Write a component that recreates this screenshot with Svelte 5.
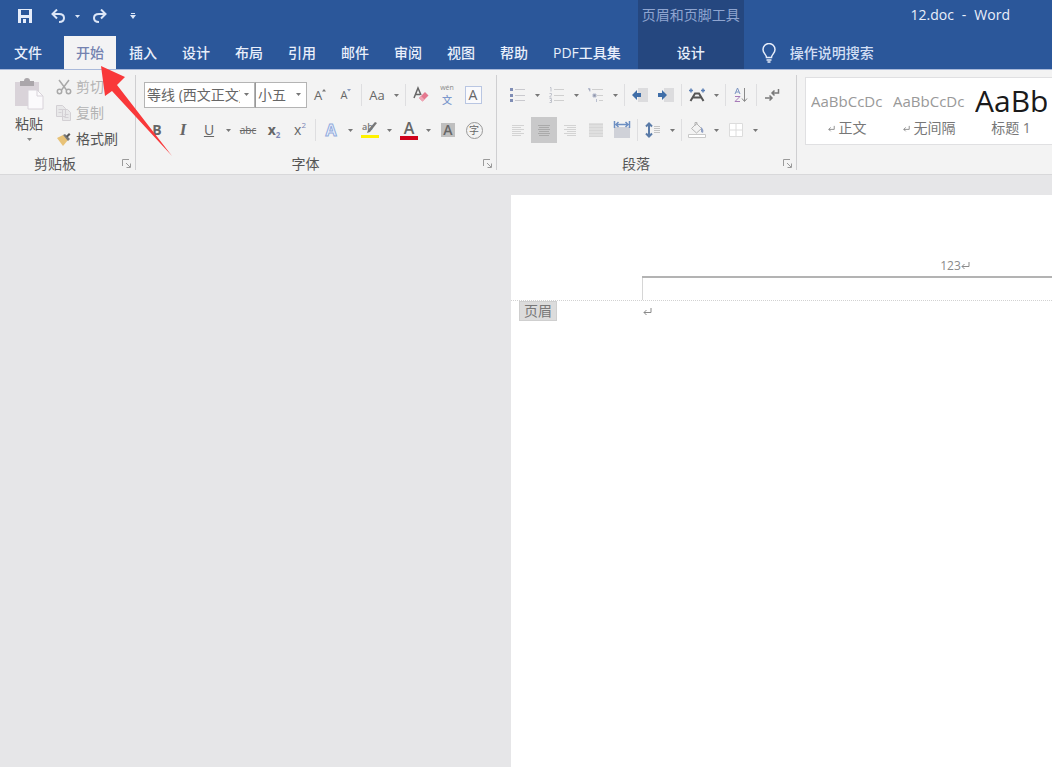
<script>
  const tabs = ['插入', '设计', '布局', '引用', '邮件', '审阅', '视图', '帮助', 'PDF工具集'];
  const styles = [
    { name: '正文', sample: 'AaBbCcDc', mark: true },
    { name: '无间隔', sample: 'AaBbCcDc', mark: true },
    { name: '标题 1', sample: 'AaBb', big: true },
  ];

  let active = $state('开始');
  let font = $state('等线 (西文正文)');
  let size = $state('小五');
</script>

{#snippet caret(label)}
  <button class="caret" aria-label={label}>
    <svg width="5" height="3" viewBox="0 0 5 3"><path d="M0 0h5L2.500 3z" fill="#777" /></svg>
  </button>
{/snippet}

{#snippet launcher(label)}
  <button class="launcher" aria-label={label}>
    <svg width="10" height="10" viewBox="0 0 10 10" fill="none" stroke="#9a9a9a">
      <path d="M.5 7V.5H7M4 4l4 4M8.500 4.500v4h-4" />
    </svg>
  </button>
{/snippet}

{#snippet mark()}
  <svg class="mark" width="9" height="8" viewBox="0 0 9 8" fill="none" stroke="currentColor">
    <path d="M8 0v4.500H1M3.500 2L1 4.500 3.500 7" />
  </svg>
{/snippet}

<div class="app">
  <header class="top">
    <div class="main-tabs">
      <div class="quick">
        <button aria-label="保存">
          <svg width="14" height="14" viewBox="0 0 14 14">
            <path d="M0 0h14v14H0z" fill="#e6edfa" />
            <path d="M3 1h8v5H3zM3 9h8v5H3z" fill="#2b579a" />
            <path d="M5 10h3v4H5z" fill="#e6edfa" />
          </svg>
        </button>
        <button class="undo" aria-label="撤消">
          <svg width="14" height="14" viewBox="0 0 14 14" fill="none" stroke="#dce6f7" stroke-width="2">
            <path d="M6 0.500L1.500 5 6 9.500M2 5h6c3 0 5 1.500 5 4s-2 4-5 4" />
          </svg>
        </button>
        <button class="drop" aria-label="撤消列表">
          <svg width="5" height="3" viewBox="0 0 5 3"><path d="M0 0h5L2.500 3z" fill="#dce6f7" /></svg>
        </button>
        <button class="redo" aria-label="恢复">
          <svg width="14" height="14" viewBox="0 0 14 14" fill="none" stroke="#dce6f7" stroke-width="2">
            <path d="M8 .5L12.500 5 8 9.500M12 5H6C3 5 1 6.500 1 9s2 4 5 4" />
          </svg>
        </button>
        <button class="more" aria-label="自定义快速访问工具栏">
          <svg width="6" height="6" viewBox="0 0 6 6" fill="#dce6f7"><path d="M1 0h4v1H1zM0 2h6L3 6z" /></svg>
        </button>
      </div>
      <nav class="tabs">
        <button class="tab file">文件</button>
        <button class="tab" class:active={active === '开始'} onclick={() => (active = '开始')}>开始</button>
        {#each tabs as t (t)}
          <button class="tab" class:active={active === t} onclick={() => (active = t)}>{t}</button>
        {/each}
      </nav>
    </div>
    <div class="context">
      <div class="context-name">页眉和页脚工具</div>
      <button class="tab">设计</button>
    </div>
    <div class="right">
      <div class="title"><span>12.doc</span><span>-</span><span>Word</span></div>
      <label class="tell">
        <svg width="14" height="20" viewBox="0 0 14 20" fill="none" stroke="#e6edfa" stroke-width="1.500">
          <path d="M4.500 14.500c0-3-3.500-4-3.500-8a6 6 0 0 1 12 0c0 4-3.500 5-3.500 8z" />
          <path d="M4.500 17h5M5.500 19h3" />
        </svg>
        <input type="text" placeholder="操作说明搜索" aria-label="操作说明搜索" />
      </label>
    </div>
  </header>

  <div class="ribbon">
    <section class="group clipboard">
      <div class="clip-body">
        <button class="paste">
          <svg width="32" height="32" viewBox="0 0 32 32">
            <path d="M2 4h24v24H2z" fill="#d9d3d9" />
            <path d="M7 3h4a3 3 0 0 1 6 0h4v5H7z" fill="#aaa6aa" />
            <path d="M15 12h9l6 6v13H15z" fill="#fbfafc" stroke="#d8d3da" />
            <path d="M24 12v6h6" fill="none" stroke="#d8d3da" />
          </svg>
          <span>粘贴</span>
          <svg width="5" height="3" viewBox="0 0 5 3"><path d="M0 0h5L2.500 3z" fill="#888" /></svg>
        </button>
        <div class="clip-list">
          <button class="dim">
            <svg width="16" height="16" viewBox="0 0 16 16" fill="none" stroke="#a9a9a9" stroke-width="1.500">
              <path d="M3 1l7.500 10M13 1L5.500 11" />
              <circle cx="3.500" cy="12.500" r="2.200" /><circle cx="12.500" cy="12.500" r="2.200" />
            </svg>
            剪切
          </button>
          <button class="dim">
            <svg width="16" height="16" viewBox="0 0 16 16" fill="#e8e8e9" stroke="#d3d0d4">
              <path d="M.5 .5h6l3 3v8h-9zM6.500 4.500h5l3 3v8h-8z" />
              <path d="M2.500 4.500h4M2.500 7.500h3M8.500 9.500h4M8.500 12.500h4" />
            </svg>
            复制
          </button>
          <button>
            <svg width="16" height="16" viewBox="0 0 16 16">
              <path d="M1 7l6-3 5 5-5 6z" fill="#e8c277" />
              <path d="M7 4l2-1 5 5-2 2z" fill="#777" />
              <path d="M10 5l3-3 1.500 1.500-3 3z" fill="#555" />
            </svg>
            格式刷
          </button>
        </div>
      </div>
      <footer><span>剪贴板</span>{@render launcher('剪贴板设置')}</footer>
    </section>

    <section class="group font">
      <div class="rows">
        <div class="row">
          <div class="combo name">
            <select aria-label="字体" bind:value={font}>
              <option>等线 (西文正文)</option>
              <option>宋体</option>
            </select>
            <svg width="5" height="3" viewBox="0 0 5 3"><path d="M0 0h5L2.500 3z" fill="#777" /></svg>
          </div>
          <div class="combo size">
            <select aria-label="字号" bind:value={size}>
              <option>小五</option>
              <option>五号</option>
            </select>
            <svg width="5" height="3" viewBox="0 0 5 3"><path d="M0 0h5L2.500 3z" fill="#777" /></svg>
          </div>
          <button class="tool" aria-label="增大字号">
            <span class="grow">A</span>
            <svg width="4" height="12" viewBox="0 0 4 12"><path d="M0 2.500L2 0l2 2.500z" fill="#777" /></svg>
          </button>
          <button class="tool" aria-label="减小字号">
            <span class="shrink">A</span>
            <svg width="4" height="12" viewBox="0 0 4 12"><path d="M0 0h4L2 2.500z" fill="#8a9cc0" /></svg>
          </button>
          <i class="sep"></i>
          <button class="tool case">Aa</button>
          {@render caret('更改大小写')}
          <i class="sep"></i>
          <button class="tool" aria-label="清除格式">
            <svg width="16" height="18" viewBox="0 0 16 18">
              <path d="M1 12L5 2l3 7M2.500 8.500H7" fill="none" stroke="#666" stroke-width="1.500" />
              <path d="M6 12l6-6 3.500 3.500-6 6z" fill="#e5788f" />
              <path d="M6 12l2-2 3.500 3.500-2 2z" fill="#efa5b4" />
            </svg>
          </button>
          <button class="tool phonetic"><small>wén</small><b>文</b></button>
          <button class="tool"><span class="boxed">A</span></button>
        </div>
        <div class="row">
          <button class="tool bold">B</button>
          <button class="tool italic">I</button>
          <button class="tool underline">U</button>
          {@render caret('下划线样式')}
          <button class="tool strike">abc</button>
          <button class="tool script">x<sub>2</sub></button>
          <button class="tool script light">x<sup>2</sup></button>
          <i class="sep"></i>
          <button class="tool effect">A</button>
          {@render caret('文本效果')}
          <button class="tool" aria-label="突出显示">
            <svg width="20" height="22" viewBox="0 0 20 22">
              <text x="2" y="11" font-size="9" font-weight="600" fill="#777">ab</text>
              <path d="M17 4l-7 9-3 1 1-3 7-8z" fill="#777" />
              <path d="M1 16h18v3H1z" fill="#fff200" />
            </svg>
          </button>
          {@render caret('突出显示颜色')}
          <button class="tool"><span class="color">A</span></button>
          {@render caret('字体颜色')}
          <button class="tool"><span class="shade">A</span></button>
          <button class="tool"><span class="ring">字</span></button>
        </div>
      </div>
      <footer><span>字体</span>{@render launcher('字体设置')}</footer>
    </section>

    <section class="group para">
      <div class="rows">
        <div class="row">
          <button class="tool" aria-label="项目符号">
            <svg width="16" height="16" viewBox="0 0 16 16">
              <path d="M5 2.500h10M5 8.500h10M5 13.500h10" stroke="#c9c9ce" />
              <path d="M0 1h3v3H0zM0 7h3v3H0zM0 12h3v3H0z" fill="#7f8db5" />
            </svg>
          </button>
          {@render caret('项目符号库')}
          <button class="tool" aria-label="编号">
            <svg width="16" height="16" viewBox="0 0 16 16">
              <path d="M5 2.500h10M5 8.500h10M5 13.500h10" stroke="#cfcfcf" />
              <path d="M1 .5h1v4M.5 6.500h2v1.500l-2 2h2M.5 11.500h2v4h-2M1 13.500h1" fill="none" stroke="#c0c3cc" />
            </svg>
          </button>
          {@render caret('编号库')}
          <button class="tool" aria-label="多级列表">
            <svg width="16" height="16" viewBox="0 0 16 16">
              <path d="M4 2.500h11M9 8.500h6M11 13.500h4" stroke="#cfcfcf" />
              <path d="M0 1.500h2v3M5 7h3v3H5zM8.500 12v3" fill="#8d93a8" stroke="#b9bfd0" />
            </svg>
          </button>
          {@render caret('列表库')}
          <i class="sep"></i>
          <button class="tool" aria-label="减少缩进量">
            <svg width="16" height="14" viewBox="0 0 16 14">
              <path d="M6 0h10v14H6z" fill="#dcdcde" />
              <path d="M0 7l5-5v3h4v4H5v3z" fill="#3f6ea8" />
            </svg>
          </button>
          <button class="tool" aria-label="增加缩进量">
            <svg width="16" height="14" viewBox="0 0 16 14">
              <path d="M6 0h10v14H6z" fill="#dcdcde" />
              <path d="M9 7L4 2v3H0v4h4v3z" fill="#3f6ea8" />
            </svg>
          </button>
          <i class="sep"></i>
          <button class="tool" aria-label="中文版式">
            <svg width="16" height="14" viewBox="0 0 16 14">
              <path d="M1.500 13L6 5.500h4l4.500 7.500M4 9.500h8" fill="none" stroke="#555" stroke-width="2" />
              <path d="M0 2.500h4M2 .5v4M12 2.500h4M14 .5v4" stroke="#5b7fb5" stroke-width="1.500" />
            </svg>
          </button>
          {@render caret('中文版式选项')}
          <i class="sep"></i>
          <button class="tool" aria-label="排序">
            <svg width="14" height="16" viewBox="0 0 14 16" fill="none">
              <path d="M1 7l2.500-6L6 7M2 5h3" stroke="#7d95c2" />
              <path d="M1 9.500h5l-5 5h5" stroke="#a77bb8" />
              <path d="M10.500 1v13M8 11.500l2.500 3 2.500-3" stroke="#8a8a8a" />
            </svg>
          </button>
          <i class="sep"></i>
          <button class="tool" aria-label="显示编辑标记">
            <svg width="16" height="14" viewBox="0 0 16 14" fill="none" stroke="#7a7a7a" stroke-width="1.500">
              <path d="M14.500 1v4H8M10.500 2.500L8 5l2.500 2.500M1 10h7M5.500 7.500L8 10l-2.500 2.500" />
            </svg>
          </button>
        </div>
        <div class="row">
          <button class="tool" aria-label="左对齐">
            <svg width="14" height="13" viewBox="0 0 14 13" stroke="#d3d3d3">
              <path d="M1 1.500h12M1 3.500h9M1 5.500h12M1 7.500h9M1 9.500h12M1 11.500h9" />
            </svg>
          </button>
          <button class="tool pressed" aria-label="居中">
            <svg width="14" height="13" viewBox="0 0 14 13" stroke="#aaa">
              <path d="M1 1.500h12M2 3.500h10M1 5.500h12M2 7.500h10M1 9.500h12M2 11.500h10" />
            </svg>
          </button>
          <button class="tool" aria-label="右对齐">
            <svg width="14" height="13" viewBox="0 0 14 13" stroke="#d3d3d3">
              <path d="M1 1.500h12M4 3.500h9M1 5.500h12M4 7.500h9M1 9.500h12M4 11.500h9" />
            </svg>
          </button>
          <button class="tool" aria-label="两端对齐">
            <svg width="14" height="14" viewBox="0 0 14 14">
              <path d="M0 0h14v14H0z" fill="#dfdfdf" />
              <path d="M0 1.500h14M0 4.500h14M0 7.500h14M0 10.500h14M0 13.500h14" stroke="#d6d6d6" />
            </svg>
          </button>
          <button class="tool" aria-label="分散对齐">
            <svg width="18" height="18" viewBox="0 0 18 18">
              <path d="M1 6h16v11H1z" fill="#cfd1d8" />
              <path d="M1.500 0v7M16.500 0v7M3 3.500h12M5.500 1L3 3.500 5.500 6M12.500 1L15 3.500 12.500 6" fill="none" stroke="#6d8fc2" stroke-width="1.500" />
            </svg>
          </button>
          <i class="sep"></i>
          <button class="tool" aria-label="行距">
            <svg width="16" height="16" viewBox="0 0 16 16" fill="none">
              <path d="M4 1.500v13M1 4.500l3-3 3 3M1 11.500l3 3 3-3" stroke="#5a7ba8" stroke-width="2" />
              <path d="M9 4.500h6M9 6.500h6M9 8.500h6M9 10.500h6" stroke="#c4c4c4" />
            </svg>
          </button>
          {@render caret('行距选项')}
          <i class="sep"></i>
          <button class="tool" aria-label="底纹">
            <svg width="20" height="18" viewBox="0 0 20 18" fill="none">
              <path d="M4.500 7.500l5-5 5 5-5 4.500zM8 5V1.500h2V4" stroke="#b5b5b5" />
              <path d="M14 6c2 2 3 3 2 6l-2-1z" fill="#8fa0c5" />
              <path d="M1.500 13.500h17v3h-17z" fill="#fff" stroke="#c8c8c8" />
            </svg>
          </button>
          {@render caret('底纹颜色')}
          <button class="tool" aria-label="边框">
            <svg width="14" height="14" viewBox="0 0 14 14" fill="#fff" stroke="#dcdcdc">
              <path d="M.5 .5h13v13H.5zM7 .5v13M.5 7h13" />
            </svg>
          </button>
          {@render caret('边框选项')}
        </div>
      </div>
      <footer><span>段落</span>{@render launcher('段落设置')}</footer>
    </section>

    <section class="gallery">
      {#each styles as s (s.name)}
        <button class="style">
          <span class="sample" class:big={s.big}>{s.sample}</span>
          <span class="style-name">{#if s.mark}{@render mark()}{/if}{s.name}</span>
        </button>
      {/each}
    </section>
  </div>

  <main class="canvas">
    <article class="page">
      <div class="page-head">
        <div class="head-area">
          <p class="head-text">123{@render mark()}</p>
          <div class="head-gap"></div>
        </div>
      </div>
      <div class="page-body">
        <span class="tag">页眉</span>
        <p class="para-end">{@render mark()}</p>
      </div>
    </article>
  </main>

  <svg class="pointer" width="72" height="92" viewBox="0 0 72 92">
    <path d="M0 0l24 11-8 8 55 71L11 25l-7 5z" fill="#f9383a" />
  </svg>
</div>

<style>
  :global(body) {
    margin: 0;
  }
  .app {
    position: relative;
    display: flex;
    flex-direction: column;
    min-height: 100vh;
    overflow: hidden;
    background: #e6e6e8;
    color: #555;
    font-family: "Open Sans", "Noto Sans CJK SC", sans-serif;
    font-size: 14px;
    line-height: 20px;
  }
  button, select, input {
    margin: 0;
    padding: 0;
    border: none;
    background: transparent;
    color: inherit;
    font: inherit;
  }
  svg { flex: none; }
  p { margin: 0; }

  .top {
    display: flex;
    height: 69px;
    background: #2b579a;
    border-bottom: 1px solid #a9b9da;
    color: #e9effb;
  }
  .main-tabs {
    display: flex;
    flex-direction: column;
    padding-right: 5px;
  }
  .quick {
    display: flex;
    align-items: center;
    height: 36px;
    padding: 0 0 4px 18px;
    box-sizing: border-box;
  }
  .quick button { display: flex; }
  .quick .undo { margin-left: 19px; }
  .quick .drop { margin-left: 10px; }
  .quick .redo { margin-left: 13px; }
  .quick .more { margin-left: 23px; }
  .tabs {
    display: flex;
    flex: 1;
    gap: 1px;
  }
  .tab {
    padding: 0 12px;
    font-weight: 500;
    white-space: nowrap;
  }
  .tab.file { padding: 0 21px 0 14px; }
  .tab.active {
    background: #f3f3f4;
    color: #7482b0;
  }
  .context {
    display: flex;
    flex-direction: column;
    width: 106px;
    background: #25477f;
    text-align: center;
  }
  .context-name {
    height: 36px;
    line-height: 30px;
    color: #8fa5d0;
    white-space: nowrap;
  }
  .context .tab { flex: 1; }
  .right {
    display: flex;
    flex: 1;
    flex-direction: column;
  }
  .title {
    display: flex;
    justify-content: flex-end;
    gap: 8px;
    height: 36px;
    padding-right: 42px;
    line-height: 30px;
    font-weight: 500;
  }
  .tell {
    display: flex;
    flex: 1;
    align-items: center;
    gap: 14px;
    padding-left: 18px;
  }
  .tell input {
    width: 120px;
    font-weight: 500;
  }
  .tell input::placeholder {
    color: #d3dff4;
    opacity: 1;
  }

  .ribbon {
    display: flex;
    height: 104px;
    background: #f3f3f3;
    border-bottom: 1px solid #d8d8da;
  }
  .group {
    display: flex;
    flex: none;
    flex-direction: column;
    box-sizing: border-box;
    position: relative;
  }
  .group::after {
    content: '';
    position: absolute;
    top: 5px;
    right: 0;
    bottom: 4px;
    width: 1px;
    background: #cfcfd1;
  }
  .clipboard { width: 136px; }
  .font { width: 361px; }
  .para { width: 300px; }
  .group footer {
    display: flex;
    align-items: center;
    height: 20px;
    padding-right: 4px;
  }
  .group footer span {
    flex: 1;
    padding-right: 8px;
    text-align: center;
  }
  .clipboard footer span { padding-right: 12px; }
  .launcher { display: flex; }

  .clip-body {
    display: flex;
    height: 85px;
    gap: 6px;
    padding-left: 13px;
    box-sizing: border-box;
  }
  .paste {
    display: flex;
    flex-direction: column;
    align-items: center;
    gap: 4px;
    width: 32px;
    padding-top: 8px;
  }
  .paste span { white-space: nowrap; }
  .clip-list {
    display: flex;
    flex-direction: column;
    gap: 6px;
    padding: 7px 0 0 5px;
  }
  .clip-list button {
    display: flex;
    align-items: center;
    gap: 4px;
    height: 20px;
    white-space: nowrap;
  }
  .clip-list .dim { color: #b4b4b4; }

  .rows {
    display: flex;
    flex-direction: column;
    gap: 9px;
    height: 85px;
    padding: 12px 0 0 8px;
    box-sizing: border-box;
  }
  .row {
    display: flex;
    align-items: center;
    height: 26px;
  }
  .tool {
    display: flex;
    flex: none;
    align-items: center;
    justify-content: center;
    width: 26px;
    height: 26px;
    color: #666;
  }
  .tool.pressed { background: #c9c9ca; }
  .caret {
    display: flex;
    flex: none;
    align-items: center;
    justify-content: center;
    width: 13px;
    height: 26px;
  }
  .sep {
    flex: none;
    width: 1px;
    height: 22px;
    margin: 0 2px;
    background: #dedee0;
  }
  .combo {
    position: relative;
    height: 26px;
    box-sizing: border-box;
    border: 1px solid #b4b4b4;
    background: #fff;
  }
  .combo.name { width: 111px; }
  .combo.size { width: 52px; border-left: 1px solid #999; }
  .combo select {
    width: 100%;
    height: 24px;
    padding: 0 14px 0 2px;
    appearance: none;
    color: #666;
  }
  .combo svg {
    position: absolute;
    top: 10px;
    right: 5px;
    pointer-events: none;
  }
  .grow { font-size: 13px; }
  .shrink { font-size: 11px; }
  .case { font-size: 13px; }
  .phonetic { flex-direction: column; }
  .phonetic small {
    color: #888;
    font-size: 7px;
    line-height: 10px;
  }
  .phonetic b {
    color: #7d98cd;
    font-size: 10px;
    font-weight: 500;
    line-height: 14px;
  }
  .boxed {
    width: 15px;
    border: 1px solid #b9c6e2;
    background: #fafafc;
    line-height: 16px;
    text-align: center;
  }
  .bold { font-weight: 700; }
  .italic { font-family: "Liberation Serif", serif; font-size: 17px; font-style: italic; font-weight: 700; }
  .underline { text-decoration: underline; }
  .strike { font-size: 10px; text-decoration: line-through; }
  .script { font-weight: 700; }
  .script.light { font-weight: 500; }
  .script sub, .script sup { color: #7b86b5; font-size: 8px; line-height: 8px; }
  .script sub { align-self: flex-end; padding-bottom: 4px; }
  .script sup { align-self: flex-start; padding-top: 4px; }
  .effect {
    color: #eef3fc;
    font-size: 16px;
    font-weight: 700;
    -webkit-text-stroke: 1px #92acdd;
  }
  .color {
    width: 18px;
    border-bottom: 4px solid #d0021b;
    font-size: 16px;
    font-weight: 600;
    line-height: 15px;
    text-align: center;
  }
  .shade {
    width: 14px;
    background: #bfbfbf;
    line-height: 14px;
    font-weight: 600;
    text-align: center;
  }
  .ring {
    width: 15px;
    border: 1px solid #999;
    border-radius: 50%;
    font-size: 10px;
    line-height: 15px;
    text-align: center;
  }

  .gallery {
    display: flex;
    flex: 1;
    align-self: flex-start;
    height: 66px;
    margin: 7px 0 0 8px;
    border: 1px solid #e0e0e2;
    border-right: none;
    background: #fff;
    overflow: hidden;
  }
  .style {
    flex: none;
    display: flex;
    flex-direction: column;
    width: 82px;
    padding: 4px 5px 0;
    color: #777;
  }
  .sample {
    width: 100%;
    height: 36px;
    overflow: hidden;
    color: #999;
    font-size: 15px;
    line-height: 38px;
    text-align: left;
    white-space: nowrap;
  }
  .sample.big {
    color: #1a1a1a;
    font-size: 30px;
  }
  .style-name {
    align-self: center;
    white-space: nowrap;
  }
  .style-name .mark { margin-right: 4px; width: 7px; }

  .canvas {
    display: flex;
    flex: 1;
    padding: 20px 0 0 511px;
  }
  .page {
    flex: 1;
    min-width: 0;
    overflow: hidden;
    background: #fff;
  }
  .page-head {
    padding: 61px 0 0 131px;
    border-bottom: 1px dotted #d2d2d2;
  }
  .head-area { width: 626px; }
  .head-text {
    border-bottom: 2px solid #b3b3b3;
    color: #8a8a8a;
    font-size: 12px;
    text-align: center;
  }
  .head-gap {
    height: 22px;
    border-left: 1px solid #d6d6d6;
  }
  .page-body {
    display: flex;
    align-items: flex-start;
    padding-left: 8px;
  }
  .tag {
    padding: 0 4px;
    border: 1px solid #cfcfcf;
    background: #dcdcdc;
    color: #777;
    line-height: 18px;
  }
  .para-end {
    margin-left: 86px;
    color: #8a8a8a;
  }

  .pointer {
    position: absolute;
    top: 66px;
    left: 101px;
    pointer-events: none;
  }
</style>
